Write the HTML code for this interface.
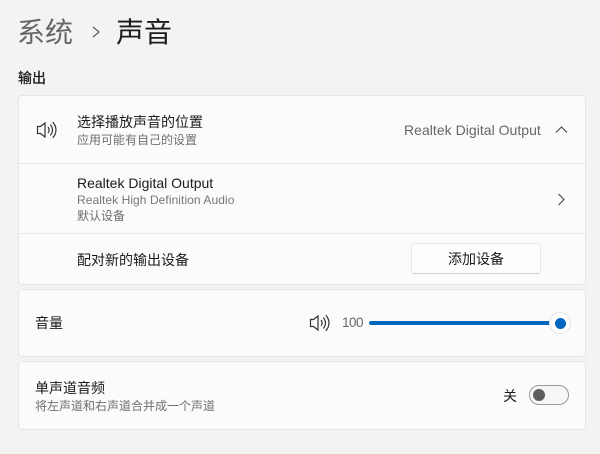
<!DOCTYPE html>
<html lang="zh-CN">
<head>
<meta charset="utf-8">
<style>
html,body{margin:0;padding:0;width:600px;height:454px;overflow:hidden;background:#f3f3f3}
body{position:relative;font-family:"Liberation Sans","Noto Sans CJK SC",sans-serif;color:#1b1b1b}
.t{position:absolute;white-space:nowrap;line-height:1}
.card{position:absolute;left:18px;width:566px;background:#fbfbfb;border:1px solid #e5e5e5;border-radius:4px}
.line{position:absolute;left:19px;width:566px;height:1px;background:#e9e9e9}
.sub{color:#6f6f6f;font-size:12px}
.main{font-size:14px;color:#1b1b1b}
svg{position:absolute;overflow:visible}
</style>
</head>
<body>
<div class="t" style="left:17px;top:19px;font-size:28px;color:#666">系统</div>
<div class="t" style="left:116px;top:19px;font-size:28px;color:#1b1b1b">声音</div>
<svg style="left:91px;top:26px" width="12" height="12" fill="none" stroke="#666" stroke-width="1.4"><path d="M2 1l6 5-6 5"/></svg>
<div class="t" style="left:18px;top:71px;font-size:14px;color:#1b1b1b;-webkit-text-stroke:.3px #1b1b1b">输出</div>

<div class="card" style="top:95px;height:188px"></div>
<div class="line" style="top:163px"></div>
<div class="line" style="top:233px"></div>
<svg style="left:36px;top:120px" width="22" height="20" fill="none" stroke="#333" stroke-width="1.2"><path d="M1.500 6.500h3l4.500-3.500v14l-4.500-3.500h-3z"/><path d="M12 7c1.500 2 1.500 4 0 6"/><path d="M14.300 4.500c2.800 3.500 2.800 7.500 0 11"/><path d="M16.800 2.200c4.200 4.800 4.200 10.800 0 15.600"/></svg>
<div class="t main" style="left:77px;top:115px">选择播放声音的位置</div>
<div class="t sub" style="left:77px;top:134px">应用可能有自己的设置</div>
<div class="t" style="left:404px;top:123px;font-size:14px;color:#666;letter-spacing:.03px">Realtek Digital Output</div>
<svg style="left:555px;top:125px" width="13" height="9" fill="none" stroke="#444" stroke-width="1.1"><path d="M1 7.500l5.500-5.500 5.500 5.500"/></svg>

<div class="t main" style="left:77px;top:176px">Realtek Digital Output</div>
<div class="t sub" style="left:77px;top:194px;color:#777;letter-spacing:.07px">Realtek High Definition Audio</div>
<div class="t sub" style="left:77px;top:210px">默认设备</div>
<svg style="left:557px;top:193px" width="9" height="13" fill="none" stroke="#444" stroke-width="1.1"><path d="M1.500 1l5.500 5.500-5.500 5.500"/></svg>

<div class="t main" style="left:77px;top:253px">配对新的输出设备</div>
<div style="position:absolute;left:411px;top:243px;width:128px;height:29px;background:#fefefe;border:1px solid #e8e8e8;border-bottom-color:#d0d0d0;border-radius:4px"></div>
<div class="t main" style="left:448px;top:252px">添加设备</div>

<div class="card" style="top:289px;height:66px"></div>
<div class="t" style="left:35px;top:316px;font-size:14px">音量</div>
<svg style="left:309px;top:313px" width="22" height="20" fill="none" stroke="#333" stroke-width="1.2"><path d="M1.500 6.500h3l4.500-3.500v14l-4.500-3.500h-3z"/><path d="M12 7c1.500 2 1.500 4 0 6"/><path d="M14.300 4.500c2.800 3.500 2.800 7.500 0 11"/><path d="M16.800 2.200c4.200 4.800 4.200 10.800 0 15.600"/></svg>
<div class="t" style="left:342px;top:316px;font-size:13.500px;color:#666;letter-spacing:-.5px">100</div>
<div style="position:absolute;left:369px;top:321px;width:186px;height:4px;background:#0067c0;border-radius:2px"></div>
<div style="position:absolute;left:549px;top:312px;width:20px;height:20px;background:#fff;border:1px solid #e3e3e3;border-radius:50%;box-sizing:content-box;margin:-.5px 0 0 -.5px"></div>
<div style="position:absolute;left:554.500px;top:317.500px;width:11px;height:11px;background:#0067c0;border-radius:50%"></div>

<div class="card" style="top:361px;height:67px"></div>
<div class="t main" style="left:35px;top:381px">单声道音频</div>
<div class="t sub" style="left:35px;top:400px">将左声道和右声道合并成一个声道</div>
<div class="t" style="left:503px;top:389px;font-size:14px">关</div>
<div style="position:absolute;left:529px;top:385px;width:38px;height:18px;background:#f6f6f6;border:1px solid #9a9a9a;border-radius:10px"></div>
<div style="position:absolute;left:533px;top:389px;width:12px;height:12px;background:#5d5d5d;border-radius:50%"></div>
</body>
</html>
